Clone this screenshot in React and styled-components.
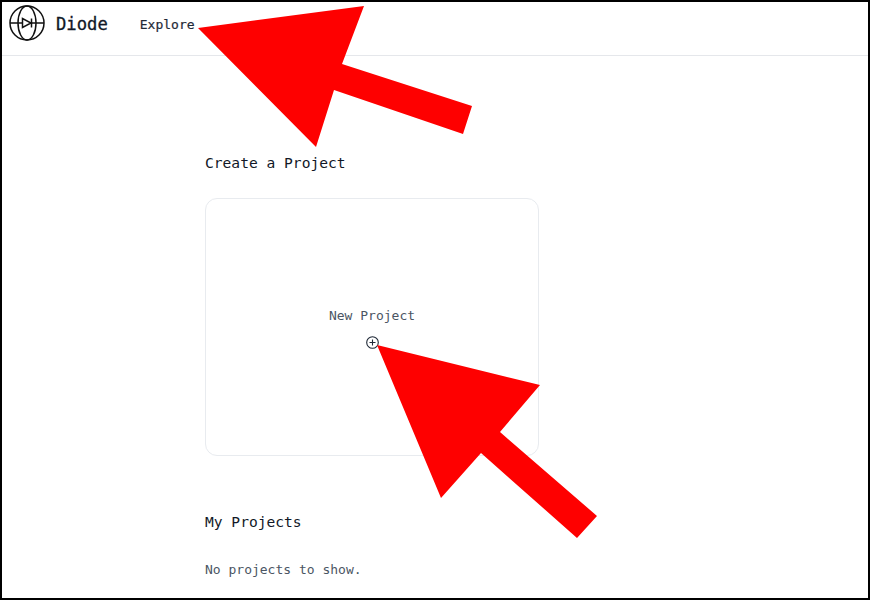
import styled, { createGlobalStyle } from "styled-components";

const GlobalStyle = createGlobalStyle`
  html, body {
    margin: 0;
    padding: 0;
    background: #fff;
  }
`;

const Page = styled.div`
  position: relative;
  box-sizing: border-box;
  width: 870px;
  height: 600px;
  border: 2px solid #000;
  overflow: hidden;
  background: #fff;
  font-family: "DejaVu Sans Mono", "Liberation Mono", monospace;
  color: #1f2937;
`;

const Header = styled.header`
  display: flex;
  align-items: center;
  box-sizing: border-box;
  height: 54px;
  padding: 0 0 12px 7px;
  border-bottom: 1px solid #e5e7eb;
`;

const Brand = styled.span`
  margin-left: 11px;
  margin-top: 2px;
  font-size: 17.2px;
  font-weight: 400;
  -webkit-text-stroke: 0.3px #111827;
  color: #111827;
`;

const NavLink = styled.a`
  margin-left: 32px;
  margin-top: 4px;
  font-size: 13px;
  font-weight: 400;
  -webkit-text-stroke: 0.2px #1f2937;
  color: #1f2937;
`;

const Main = styled.main`
  width: 334px;
  margin-left: 203px;
`;

const Heading = styled.h2`
  margin: 0;
  font-size: 14.6px;
  line-height: 20px;
  font-weight: 400;
  color: #111827;
`;

const CreateHeading = styled(Heading)`
  margin-top: 97px;
`;

const ProjectsHeading = styled(Heading)`
  margin-top: 56px;
`;

const NewCard = styled.button`
  display: flex;
  flex-direction: column;
  align-items: center;
  justify-content: center;
  gap: 13px;
  box-sizing: border-box;
  width: 334px;
  height: 258px;
  margin-top: 25px;
  padding: 3px 0 0;
  background: #fff;
  border: 1px solid #e8ebef;
  border-radius: 12px;
  font: inherit;
  font-size: 13px;
  color: #4b5563;
`;

const Empty = styled.p`
  margin: 29px 0 0;
  font-size: 13px;
  line-height: 18px;
  color: #4b5563;
`;

const Arrows = styled.svg`
  position: absolute;
  left: -2px;
  top: -2px;
  pointer-events: none;
`;

const Logo = () => (
  <svg width="36" height="36" viewBox="0 0 36 36" fill="none" stroke="#111" strokeWidth="1.5">
    <circle cx="18" cy="18" r="17" />
    <ellipse cx="18" cy="18" rx="9" ry="17" />
    <path d="M1 18H13.5M22.5 18H35" />
    <path d="M13.5 13.5V22.5L22 18Z" />
    <path d="M22.5 13.5V22.5" />
  </svg>
);

const PlusCircle = () => (
  <svg width="13" height="13" viewBox="0 0 13 13" fill="none" stroke="#1f2937" strokeWidth="1.1">
    <circle cx="6.5" cy="6.5" r="5.8" />
    <path d="M6.5 3.5V9.5M3.5 6.5H9.5" />
  </svg>
);

const App = () => {
  return (
    <Page>
      <GlobalStyle />
      <Header>
        <Logo />
        <Brand>Diode</Brand>
        <NavLink>Explore</NavLink>
      </Header>
      <Main>
        <CreateHeading>Create a Project</CreateHeading>
        <NewCard type="button">
          New Project
          <PlusCircle />
        </NewCard>
        <ProjectsHeading>My Projects</ProjectsHeading>
        <Empty>No projects to show.</Empty>
      </Main>
      <Arrows width="870" height="600" viewBox="0 0 870 600">
        <polygon fill="#fe0000" points="198,28 364,6 342,64 472,106 463,134 334,90 316,147" />
        <polygon fill="#fe0000" points="377,345 540,385 500,432 597,516 577,538 481,453 441,498" />
      </Arrows>
    </Page>
  );
};

export default App;
